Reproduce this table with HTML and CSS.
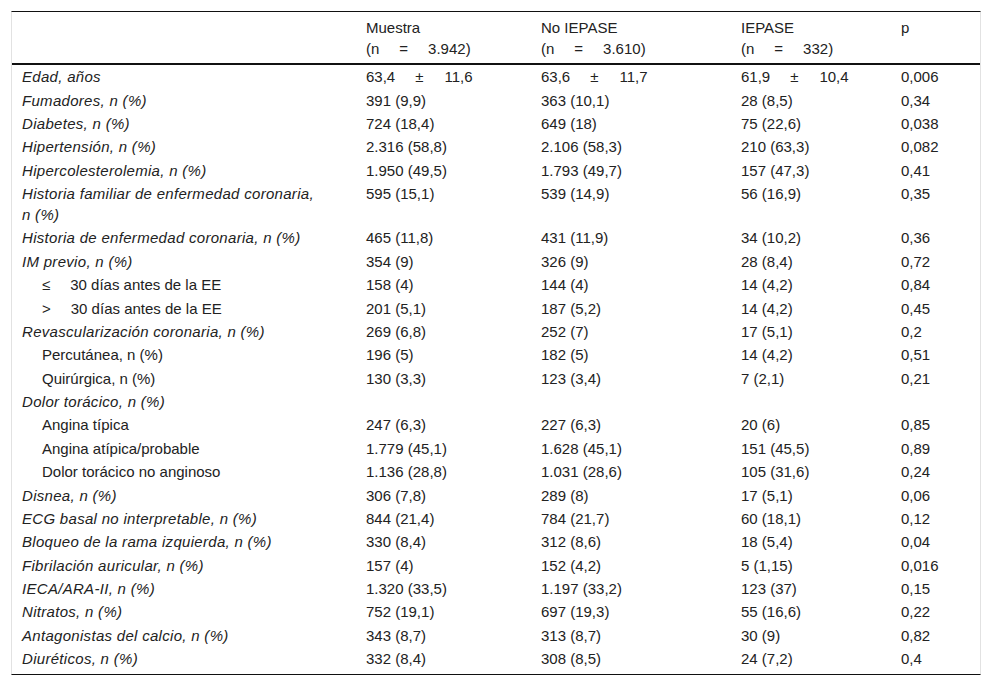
FILE: index.html
```html
<!DOCTYPE html>
<html lang="es">
<head>
<meta charset="utf-8">
<title>Tabla</title>
<link rel="stylesheet" href="styles.css">
</head>
<body>
<div class="page">
<table class="t">
<colgroup><col class="c1"><col class="c2"><col class="c3"><col class="c4"><col class="c5"></colgroup>
<thead>
<tr><th></th><th>Muestra<br>(n<span class="eq">=</span>3.942)</th><th>No IEPASE<br>(n<span class="eq">=</span>3.610)</th><th>IEPASE<br>(n<span class="eq">=</span>332)</th><th>p</th></tr>
</thead>
<tbody>
<tr><td class="lab">Edad, años</td><td>63,4<span class="pm">±</span>11,6</td><td>63,6<span class="pm">±</span>11,7</td><td>61,9<span class="pm">±</span>10,4</td><td>0,006</td></tr>
<tr><td class="lab">Fumadores, n (%)</td><td>391 (9,9)</td><td>363 (10,1)</td><td>28 (8,5)</td><td>0,34</td></tr>
<tr><td class="lab">Diabetes, n (%)</td><td>724 (18,4)</td><td>649 (18)</td><td>75 (22,6)</td><td>0,038</td></tr>
<tr><td class="lab">Hipertensión, n (%)</td><td>2.316 (58,8)</td><td>2.106 (58,3)</td><td>210 (63,3)</td><td>0,082</td></tr>
<tr><td class="lab">Hipercolesterolemia, n (%)</td><td>1.950 (49,5)</td><td>1.793 (49,7)</td><td>157 (47,3)</td><td>0,41</td></tr>
<tr><td class="lab">Historia familiar de enfermedad coronaria, n (%)</td><td>595 (15,1)</td><td>539 (14,9)</td><td>56 (16,9)</td><td>0,35</td></tr>
<tr><td class="lab">Historia de enfermedad coronaria, n (%)</td><td>465 (11,8)</td><td>431 (11,9)</td><td>34 (10,2)</td><td>0,36</td></tr>
<tr><td class="lab">IM previo, n (%)</td><td>354 (9)</td><td>326 (9)</td><td>28 (8,4)</td><td>0,72</td></tr>
<tr><td class="sub"><span class="rel">≤</span>30 días antes de la EE</td><td>158 (4)</td><td>144 (4)</td><td>14 (4,2)</td><td>0,84</td></tr>
<tr><td class="sub"><span class="rel">&gt;</span>30 días antes de la EE</td><td>201 (5,1)</td><td>187 (5,2)</td><td>14 (4,2)</td><td>0,45</td></tr>
<tr><td class="lab">Revascularización coronaria, n (%)</td><td>269 (6,8)</td><td>252 (7)</td><td>17 (5,1)</td><td>0,2</td></tr>
<tr><td class="sub">Percutánea, n (%)</td><td>196 (5)</td><td>182 (5)</td><td>14 (4,2)</td><td>0,51</td></tr>
<tr><td class="sub">Quirúrgica, n (%)</td><td>130 (3,3)</td><td>123 (3,4)</td><td>7 (2,1)</td><td>0,21</td></tr>
<tr><td class="lab">Dolor torácico, n (%)</td><td></td><td></td><td></td><td></td></tr>
<tr><td class="sub">Angina típica</td><td>247 (6,3)</td><td>227 (6,3)</td><td>20 (6)</td><td>0,85</td></tr>
<tr><td class="sub">Angina atípica/probable</td><td>1.779 (45,1)</td><td>1.628 (45,1)</td><td>151 (45,5)</td><td>0,89</td></tr>
<tr><td class="sub">Dolor torácico no anginoso</td><td>1.136 (28,8)</td><td>1.031 (28,6)</td><td>105 (31,6)</td><td>0,24</td></tr>
<tr><td class="lab">Disnea, n (%)</td><td>306 (7,8)</td><td>289 (8)</td><td>17 (5,1)</td><td>0,06</td></tr>
<tr><td class="lab">ECG basal no interpretable, n (%)</td><td>844 (21,4)</td><td>784 (21,7)</td><td>60 (18,1)</td><td>0,12</td></tr>
<tr><td class="lab">Bloqueo de la rama izquierda, n (%)</td><td>330 (8,4)</td><td>312 (8,6)</td><td>18 (5,4)</td><td>0,04</td></tr>
<tr><td class="lab">Fibrilación auricular, n (%)</td><td>157 (4)</td><td>152 (4,2)</td><td>5 (1,15)</td><td>0,016</td></tr>
<tr><td class="lab">IECA/ARA-II, n (%)</td><td>1.320 (33,5)</td><td>1.197 (33,2)</td><td>123 (37)</td><td>0,15</td></tr>
<tr><td class="lab">Nitratos, n (%)</td><td>752 (19,1)</td><td>697 (19,3)</td><td>55 (16,6)</td><td>0,22</td></tr>
<tr><td class="lab">Antagonistas del calcio, n (%)</td><td>343 (8,7)</td><td>313 (8,7)</td><td>30 (9)</td><td>0,82</td></tr>
<tr class="last"><td class="lab">Diuréticos, n (%)</td><td>332 (8,4)</td><td>308 (8,5)</td><td>24 (7,2)</td><td>0,4</td></tr>
</tbody>
</table>
</div>
</body>
</html>
```

FILE: styles.css
```css
html, body {
  margin: 0;
  background: #fff;
}
body {
  font-family: "Liberation Sans", Arial, sans-serif;
  font-size: 15px;
  color: #222;
}
.page {
  padding: 11px;
}
.t {
  width: 970px;
  table-layout: fixed;
  border-collapse: separate;
  border-spacing: 0;
  border-top: 1px solid #111;
  border-bottom: 1px solid #111;
  border-left: 1px solid #e2e2e2;
  border-right: 1px solid #e2e2e2;
}
.c1 { width: 344px; }
.c2 { width: 175px; }
.c3 { width: 200px; }
.c4 { width: 160px; }
.t th {
  font-weight: normal;
  text-align: left;
  vertical-align: top;
  line-height: 21px;
  padding: 5px 10px 4px;
  border-bottom: 2px solid #111;
}
.t td {
  vertical-align: top;
  line-height: 21px;
  padding: 1.2px 10px;
}
.t td.lab {
  font-style: italic;
  letter-spacing: 0.3px;
  padding-right: 36px;
}
.t td.sub {
  padding-left: 30px;
}
.t tr.last td {
  padding-bottom: 4.6px;
}
.eq {
  margin: 0 20px;
}
.pm {
  margin: 0 21px 0 20px;
}
.rel {
  display: inline-block;
  margin-right: 20px;
}
```
